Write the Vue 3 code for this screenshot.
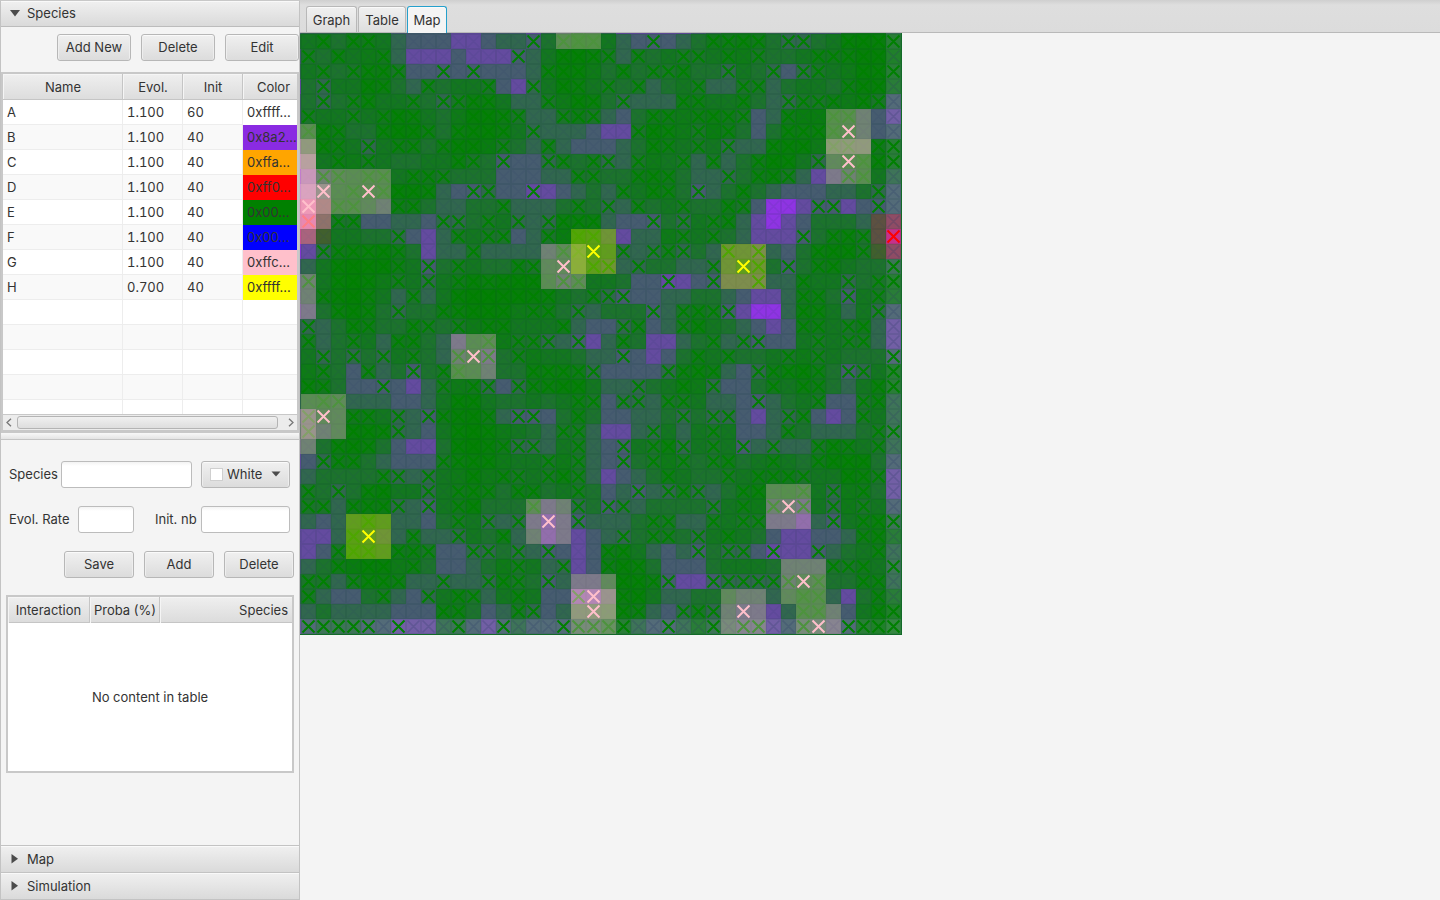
<script setup>
const species = [
  ['A', '1.100', '60', '0xffff...', '#ffffff'],
  ['B', '1.100', '40', '0x8a2...', '#8a2be2'],
  ['C', '1.100', '40', '0xffa...', '#ffa500'],
  ['D', '1.100', '40', '0xff0...', '#ff0000'],
  ['E', '1.100', '40', '0x00...', '#008000'],
  ['F', '1.100', '40', '0x00...', '#0000ff'],
  ['G', '1.100', '40', '0xffc...', '#ffc0cb'],
  ['H', '0.700', '40', '0xffff...', '#ffff00'],
]
const emptyRows = 5

// Columns occupied by green individuals, one line per map row starting at row -1
const greenRows = `
-1 0 2 4 5 6 8 9 12 13 17 19 20 26 29 31 35 37 38
1 3 4 15 17 18 19 23 27 28 29 30 32 33 36 37 38 39
-1 0 2 5 14 17 18 19 20 22 25 26 28 30 34 35 36 37 38
1 3 4 5 6 9 11 16 17 18 21 23 24 25 28 31 33 34 37 38 39
-1 1 4 5 8 12 15 17 18 20 22 26 29 30 36 37 38
1 3 4 7 9 10 11 12 16 18 19 21 25 26 29 32 33 34 35 37 38
0 3 5 6 7 11 12 13 14 17 18 19 23 24 26 27 28 29 32 35 36
0 1 2 5 6 7 8 10 11 12 13 15 22 23 24 26 28 32 33 34 35
-1 1 2 4 6 7 9 10 11 13 16 23 24 26 28 31 32 33 35 36 38 39
2 4 10 11 13 16 17 19 20 22 25 27 30 31 32 34 37 38 39
1 2 4 5 7 8 9 18 19 22 23 24 28 30 31 32 36 37
3 5 6 7 8 11 12 15 21 23 24 26 29 38
2 3 6 7 13 18 20 22 25 28 29 34 35 38
2 3 9 10 12 14 16 17 18 19 23 25 27 28
6 10 12 13 16 18 19 25 27 33 35 36 37
1 2 3 4 5 6 11 17 18 21 23 24 25 28 30 34 35 36 37
2 3 4 5 6 8 10 14 15 19 20 22 27 30 32 34 35 39
-1 0 2 3 4 6 8 10 11 12 13 14 15 17 18 24 27 30 33 36 38 39
1 2 3 4 7 10 11 12 13 14 15 16 19 20 21 33 34 36 38
2 3 4 6 9 10 11 12 13 15 16 18 23 25 26 27 28 33 34 38
0 3 4 7 8 10 12 13 17 21 22 25 26 33 34 36 37
-1 0 3 6 7 12 14 15 16 18 21 27 29 30 34 36 37
1 3 5 7 10 12 14 21 26 28 32 34 39
-1 1 4 7 9 10 15 16 17 18 19 24 25 26 27 30 31 32 33 34 36 37 39
-1 0 1 5 9 11 12 14 15 16 17 18 22 25 27 31 33 34 38 39
1 2 10 11 18 19 21 22 24 25 30 34 37 38
0 3 4 6 8 9 10 11 12 14 15 18 25 27 28 32 33 37
0 3 4 5 6 10 11 12 17 18 23 27 32 38 39
-1 2 3 4 10 11 12 13 14 15 18 21 23 24 25 27 29 31 34 35 36 38
1 2 3 9 10 11 12 16 18 21 23 25 27 28 31 34 35 36 37
5 6 8 11 13 14 16 17 18 24 28 30 31 32 33 36 37 38
-1 0 2 4 5 8 10 11 12 14 15 18 22 24 25 26 29 30 33 35 37
0 1 3 4 5 6 8 10 11 15 18 20 21 27 29 31 33 35 37
4 10 12 14 18 23 24 27 29 30 35 37 38 39
-1 3 7 10 13 21 23 24 26 28 37 38
2 3 4 6 7 8 11 12 14 16 20 21 26 28 29 31 34 38
2 4 5 7 14 17 20 21 22 35 36 37 39
-1 0 1 3 4 5 6 9 12 13 14 16 21 22 23 24 27 28 29 30 31 32 34 37 38
0 5 8 10 11 14 18 21 22 33 34 38
9 10 14 15 21 22 25 26 27 33 34 38 39
0 1 2 3 4 6 10 13 17 18 19 20 21 24 27 29 30 33 36 37 38 39`
const green = greenRows.trim().split('\n').flatMap((l, i) => l.split(' ').map(c => [+c, i - 1]))
const red = [[39, 13], [0, 12]]
const pink = [[18, -1], [1, 10], [4, 10], [0, 11], [-1, 7], [-1, 8], [-1, 9], [-1, 11], [-1, 12], [-1, 17], [-1, 26], [36, 6], [36, 8], [17, 15], [11, 21], [1, 25], [32, 31], [16, 32], [33, 36], [19, 37], [19, 38], [29, 38], [34, 39]]
const yellow = [[19, 14], [29, 15], [4, 33]]

const S = 15
const ALPHA = 0.3
const box = (c0, r0, c1, r1) => {
  const x0 = Math.max(0, 1 + c0 * S), y0 = Math.max(0, 1 + r0 * S)
  return { x: x0, y: y0, width: 1 + c1 * S - x0, height: 1 + r1 * S - y0 }
}
const area = (c, r) => box(c - 1, r - 1, Math.min(40, c + 2), Math.min(40, r + 2))
const near = (list, c, r) => list.filter(p => Math.abs(p[0] - c) < 2 && Math.abs(p[1] - r) < 2).length
const mix = (base, top, a) => base.map((v, i) => v * (1 - a) + top[i] * a)

// Each cell blends the influence of every neighbouring individual
const cells = []
const all = []
const edge = []
for (let r = -1; r < 40; r++) {
  for (let c = -1; c < 40; c++) {
    const layersHere = (c === 39 ? 2 : 3) * (r === 39 ? 2 : 3)
    let n = near(green, c, r)
    if (n > 3) n += 0.6
    let color = mix([255, 255, 255], [138, 43, 226], 1 - (1 - ALPHA) ** layersHere)
    if (near(red, c, r)) color = mix(color, [255, 0, 0], 0.42)
    color = mix(color, [0, 130, 0], 1 - (1 - ALPHA) ** n)
    if (layersHere < 9) color = mix(color, [255, 255, 255], layersHere < 6 ? 0.09 : 0.05)
    cells.push({ ...box(c, r, c + 1, r + 1), fill: `rgb(${color.map(Math.round).join(',')})` })
    all.push([c, r])
    if (layersHere < 9) edge.push([c, r])
  }
}
const shown = cells.filter(c => c.width > 0 && c.height > 0)
const crosses = list => list.map(([c, r]) => {
  const x = 1 + c * S, y = 1 + r * S
  return `M${x + 1.5} ${y + 1.5}l12 12M${x + 13.5} ${y + 1.5}l-12 12`
}).join('')
let grid = ''
for (let i = 0; i <= 40; i++) grid += `M${1 + i * S} 0V602M0 ${1 + i * S}H602`
const layers = [
  { color: '#ffc0cb', list: pink },
  { color: '#ffff00', list: yellow },
]
</script>

<template>
  <div class="app">
    <aside class="side">
      <div class="title first"><svg width="11" height="7"><path d="M0 0H10L5 6.5Z" fill="#4b4b4b" /></svg><span>Species</span></div>
      <div class="tools">
        <button class="btn">Add New</button><button class="btn">Delete</button><button class="btn">Edit</button>
      </div>
      <div class="table">
        <div class="row head"><span>Name</span><span>Evol.</span><span>Init</span><span>Color</span></div>
        <div class="rows">
          <div v-for="s in species" :key="s[0]" class="row">
            <span>{{ s[0] }}</span><span>{{ s[1] }}</span><span>{{ s[2] }}</span><span class="swatch" :style="{ background: s[4] }">{{ s[3] }}</span>
          </div>
          <div v-for="n in emptyRows" :key="n" class="row"><span></span><span></span><span></span><span></span></div>
        </div>
        <div class="scroll">
          <svg width="6" height="9"><path d="M5 .7L1 4.5L5 8.3" /></svg>
          <div class="thumb"></div>
          <svg width="6" height="9"><path d="M1 .7L5 4.5L1 8.3" /></svg>
        </div>
      </div>
      <div class="divider"></div>
      <div class="form">
        <div class="line">
          <label>Species</label><div class="field name"></div>
          <div class="btn picker"><i></i><span>White</span><svg width="10" height="6"><path d="M.5 .5H9.5L5 5.5Z" fill="#4b4b4b" /></svg></div>
        </div>
        <div class="line">
          <label>Evol. Rate</label><div class="field rate"></div><label class="init">Init. nb</label><div class="field nb"></div>
        </div>
        <div class="line actions"><button class="btn">Save</button><button class="btn">Add</button><button class="btn">Delete</button></div>
        <div class="inter">
          <div class="ihead"><span>Interaction</span><span>Proba (%)</span><span>Species</span></div>
          <div class="none">No content in table</div>
        </div>
      </div>
      <div class="title"><svg width="8" height="10"><path d="M0.5 0V9.5L7 4.75Z" fill="#4b4b4b" /></svg><span>Map</span></div>
      <div class="title last"><svg width="8" height="10"><path d="M0.5 0V9.5L7 4.75Z" fill="#4b4b4b" /></svg><span>Simulation</span></div>
    </aside>
    <main class="main">
      <nav class="tabs"><span class="tab graph">Graph</span><span class="tab tbl">Table</span><span class="tab on">Map</span></nav>
      <svg class="map" width="602" height="602">
        <rect width="602" height="602" fill="#1a7030" />
        <rect v-for="(c, i) in shown" :key="i" v-bind="c" />
        <path :d="grid" stroke="#003030" stroke-opacity=".09" stroke-width="2" />
        <path :d="crosses(all)" stroke="#30406a" stroke-opacity=".11" stroke-width="1.6" />
        <path :d="crosses(edge)" stroke="#30406a" stroke-opacity=".16" stroke-width="1.6" />
        <path :d="crosses(green)" stroke="#008000" stroke-width="2" />
        <path :d="crosses(red)" stroke="#ff0000" stroke-width="2" />
        <path d="M601.5 0V601.5H0" fill="none" stroke="#126a28" />
        <g v-for="l in layers" :key="l.color">
          <rect v-for="(p, i) in l.list" :key="i" v-bind="area(p[0], p[1])" :fill="l.color" fill-opacity=".3" />
          <path :d="crosses(l.list)" :stroke="l.color" stroke-width="2" />
        </g>
      </svg>
    </main>
  </div>
</template>

<style>
body { margin: 0; overflow: hidden; }
</style>
<style scoped>
* { box-sizing: border-box; }
.app { display: flex; width: 1440px; height: 900px; background: #f4f4f4; font: 13px/16px Inter, "Liberation Sans", sans-serif; color: #333; }
.side { width: 300px; height: 900px; border: 1px solid #c3c3c3; border-top-color: #c8c8c8; display: flex; flex-direction: column; flex: none; }
.title { height: 27px; flex: none; display: flex; align-items: center; padding-left: 10px; background: linear-gradient(#f0f0f0, #dadada); border-top: 1px solid #c3c3c3; box-shadow: inset 0 1px #f9f9f9; }
.title svg { width: 16px; flex: none; }
.title.first { height: 26px; border-top: 0; border-bottom: 1px solid #bcbcbc; padding-left: 9px; }
.title.first span { padding-bottom: 1px; }
.title.first svg { width: 17px; }
.btn { font: inherit; color: #333; border: 1px solid #b7b7b7; border-radius: 3px; background: linear-gradient(#f0f0f0, #dcdcdc); box-shadow: inset 0 1px #fafafa, inset 1px 0 #eee, inset -1px 0 #eee; height: 27px; padding: 0 0 1px; flex: none; }
.tools { display: flex; gap: 10px; padding: 7px 0 0 56px; height: 45px; flex: none; }
.tools .btn { width: 74px; }
.table { height: 361px; flex: none; border: 2px solid #c8c8c8; border-width: 2px 2px 3px 2px; margin-right: -1px; display: flex; flex-direction: column; overflow: hidden; background: #fff; width: 298px; }
.rows { flex: 1; overflow: hidden; font-variant-numeric: tabular-nums; }
.row { display: grid; grid-template-columns: 120px 60px 60px 1fr; height: 25px; line-height: 25px; background: #fff; }
.row span { border-right: 1px solid #ededed; border-bottom: 1px solid #ededed; padding-left: 4px; white-space: nowrap; overflow: hidden; }
.row span:last-child { border-right: 0; }
.rows .row:nth-child(even) { background: #f9f9f9; }
.row .swatch { border-bottom: 0; font-variant-numeric: normal; }
.head { height: 26px; flex: none; line-height: 26px; background: linear-gradient(#efefef, #dcdcdc); }
.head span { text-align: center; padding: 0 0 0 1px; border-color: #c5c5c5; box-shadow: inset 1px 1px #f5f5f5; }
.head span:last-child { padding-left: 7px; }
.scroll { height: 16px; flex: none; background: #ececec; border-top: 1px solid #c8c8c8; display: flex; align-items: center; padding: 0 3px 0 3px; }
.scroll path { fill: none; stroke: #777; stroke-width: 1.3; }
.scroll svg { flex: none; }
.thumb { width: 261px; height: 13px; border: 1px solid #b4b4b4; border-radius: 3px; background: linear-gradient(#f0f0f0, #dedede); margin: 0 10px 0 5px; flex: none; }
.divider { height: 7px; flex: none; border-bottom: 1px solid #c4c4c4; background: linear-gradient(#f8f8f8, #e4e4e4); }
.form { flex: 1; padding: 21px 5px 0; min-height: 0; }
.line { display: flex; align-items: center; height: 27px; margin-bottom: 18px; padding-left: 3px; white-space: nowrap; }
.line label { width: 52px; flex: none; padding-bottom: 1px; }
.field { height: 27px; border: 1px solid #bcbcbc; border-radius: 3px; background: linear-gradient(#f3f3f3, #fff 4px); flex: none; }
.name { width: 131px; }
.picker { width: 89px; margin-left: 9px; display: flex; align-items: center; padding-left: 8px; }
.picker i { width: 13px; height: 13px; background: #fff; border: 1px solid #cfcfcf; margin-right: 4px; }
.picker svg { margin-left: 9px; }
.line:nth-child(2) label:first-child { width: 69px; }
.rate { width: 56px; }
.line .init { width: 46px; margin-left: 21px; }
.nb { width: 89px; }
.actions { gap: 10px; padding-left: 58px; margin-bottom: 17px; }
.actions .btn { width: 70px; }
.inter { height: 178px; border: 2px solid #c8c8c8; background: #fff; display: flex; flex-direction: column; width: 288px; }
.ihead { display: grid; grid-template-columns: 82px 70px 1fr; height: 26px; line-height: 26px; background: linear-gradient(#efefef, #dcdcdc); border-bottom: 1px solid #c5c5c5; }
.ihead span { text-align: center; border-right: 1px solid #c5c5c5; box-shadow: inset 1px 1px #f5f5f5; }
.ihead span:nth-child(2) { padding-left: 1px; }
.ihead span:last-child { text-align: right; padding-right: 4px; border: 0; }
.none { flex: 1; display: flex; align-items: center; justify-content: center; }
.main { width: 1140px; }
.tabs { height: 33px; display: flex; align-items: flex-end; gap: 1px; padding-left: 6px; background: linear-gradient(#cfcfcf, #dedede 5px, #dcdcdc); border-bottom: 1px solid #b9b9b9; }
.tab { height: 26px; line-height: 27px; text-align: center; border: 1px solid #b8b8b8; border-bottom: 0; border-radius: 3px 3px 0 0; background: linear-gradient(#f0f0f0, #dedede); box-shadow: inset 0 1px #fafafa; }
.graph { width: 51px; }
.tbl { width: 48px; }
.tab.on { width: 40px; background: #f4f4f4; border-color: #25a0cc; margin-bottom: -1px; height: 27px; }
.map { display: block; }
</style>
